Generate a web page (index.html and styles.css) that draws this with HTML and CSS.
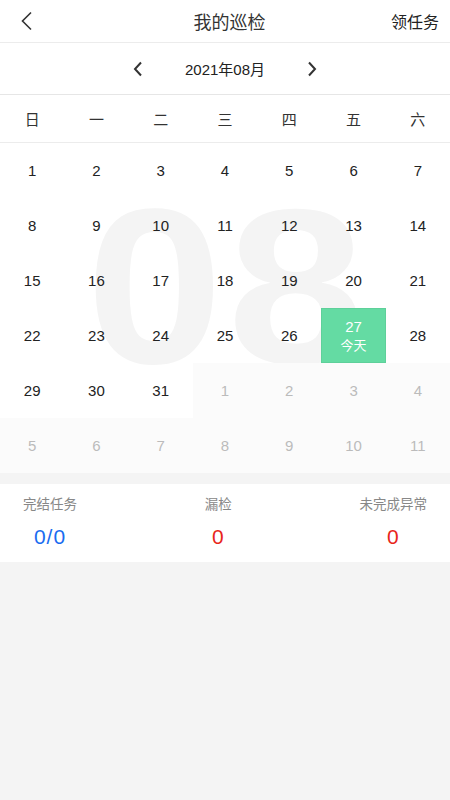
FILE: index.html
```html
<!DOCTYPE html>
<html lang="zh">
<head>
    <meta charset="UTF-8">
    <title>我的巡检</title>
    <link rel="stylesheet" href="styles.css">
</head>
<body>
<div id="header">
    <span class="back">
        <svg width="14" height="20" viewBox="0 0 14 20"><path d="M11 1.5 L2.5 10 L11 18.5" fill="none" stroke="#333" stroke-width="1.6"/></svg>
    </span>
    <span class="title">我的巡检</span>
    <span class="action">领任务</span>
</div>
<div id="month">
    <span class="arrow">
        <svg width="12" height="16" viewBox="0 0 12 16"><path d="M9 1.5 L3 8 L9 14.5" fill="none" stroke="#333" stroke-width="2"/></svg>
    </span>
    <span class="label">2021年08月</span>
    <span class="arrow">
        <svg width="12" height="16" viewBox="0 0 12 16"><path d="M3 1.5 L9 8 L3 14.5" fill="none" stroke="#333" stroke-width="2"/></svg>
    </span>
</div>
<ul id="week">
    <li>日</li><li>一</li><li>二</li><li>三</li><li>四</li><li>五</li><li>六</li>
</ul>
<div id="calendar">
    <div class="bignum"><span>08</span></div>
    <ul id="days"></ul>
</div>
<div id="stats">
    <div class="item">
        <p class="name">完结任务</p>
        <p class="val blue">0/0</p>
    </div>
    <div class="item">
        <p class="name">漏检</p>
        <p class="val red">0</p>
    </div>
    <div class="item">
        <p class="name">未完成异常</p>
        <p class="val red">0</p>
    </div>
</div>
<script>
    var oDays = document.getElementById("days");
    var html = "";
    var n = 1;
    // 2021年8月1日是周日
    for(var i=0; i<42; i++){
        if(i < 31){
            if(i + 1 == 27){
                html += '<li class="today"><span>27</span><em>今天</em></li>';
            }else{
                html += '<li><span>' + (i + 1) + '</span></li>';
            }
        }else{
            html += '<li class="other"><span>' + n + '</span></li>';
            n++;
        }
    }
    oDays.innerHTML = html;
</script>
</body>
</html>
```

FILE: styles.css
```css
*{
    margin: 0;
    padding: 0;
}
ul{
    list-style: none;
}
html, body{
    background: #f4f4f4;
}
body{
    font-family: "Liberation Sans", "Noto Sans CJK SC", sans-serif;
    color: #222;
}
#header{
    height: 42px;
    background: #fff;
    border-bottom: 1px solid #ececec;
    display: flex;
    align-items: center;
    justify-content: space-between;
    padding: 0 11px 0 20px;
    position: relative;
}
#header .back{
    display: flex;
    width: 60px;
}
#header .title{
    font-size: 18px;
    color: #333;
    font-family: "Noto Sans CJK SC", sans-serif;
}
#header .action{
    width: 60px;
    text-align: right;
    font-size: 16px;
    color: #222;
    font-family: "Noto Sans CJK SC", sans-serif;
}
#month{
    height: 51px;
    background: #fff;
    border-bottom: 1px solid #e6e6e6;
    display: flex;
    align-items: center;
    justify-content: center;
}
#month .arrow{
    display: flex;
    padding: 0 3px;
}
#month .label{
    width: 156px;
    text-align: center;
    font-size: 15px;
    color: #222;
}
#week{
    display: grid;
    grid-template-columns: repeat(7, 1fr);
    height: 47px;
    background: #fff;
    border-bottom: 1px solid #ececec;
}
#week li{
    display: flex;
    align-items: center;
    justify-content: center;
    font-size: 15px;
    color: #333;
    font-family: "Noto Sans CJK SC", sans-serif;
}
#calendar{
    position: relative;
    background: #fff;
    overflow: hidden;
}
#calendar .bignum{
    position: absolute;
    left: 0;
    right: 0;
    top: 34px;
    text-align: center;
    font-size: 220px;
    line-height: 220px;
    font-weight: bold;
    color: #f4f4f4;
    font-family: "Liberation Sans", sans-serif;
}
#calendar .bignum span{
    display: inline-block;
    letter-spacing: 4px;
    transform: scaleX(1.12);
    padding-left: 4px;
}
#days{
    position: relative;
    display: grid;
    grid-template-columns: repeat(7, 1fr);
    grid-auto-rows: 55px;
}
#days li{
    display: flex;
    flex-direction: column;
    align-items: center;
    justify-content: center;
    font-size: 15px;
    color: #222;
}
#days .other{
    background: #fbfbfb;
    color: #bbb;
}
#days .today{
    background: #64dba3;
    border: 1px solid #5ed09a;
    color: #fff;
}
#days .today em{
    font-style: normal;
    font-size: 13px;
    font-family: "Noto Sans CJK SC", sans-serif;
    line-height: 16px;
    margin-top: 2px;
}
#days .today span{
    line-height: 16px;
}
#stats{
    margin-top: 11px;
    height: 78px;
    background: #fff;
    display: flex;
    justify-content: space-between;
    padding: 0 23px;
}
#stats .item{
    text-align: center;
    padding-top: 10px;
}
#stats .name{
    font-size: 13.5px;
    color: #888;
    font-family: "Noto Sans CJK SC", sans-serif;
    line-height: 18px;
}
#stats .val{
    font-size: 21px;
    line-height: 24px;
    margin-top: 13px;
    letter-spacing: 1px;
}
#stats .blue{
    color: #1a6cf0;
}
#stats .red{
    color: #e8251a;
}
```
